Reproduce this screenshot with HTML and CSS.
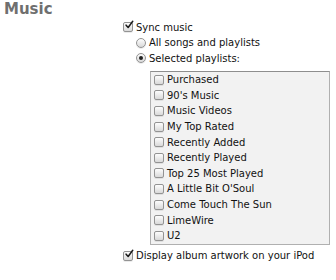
FILE: index.html
```html
<!DOCTYPE html>
<html lang="en">
<head>
    <meta charset="UTF-8">
    <title>Music</title>
    <link rel="stylesheet" href="styles.css">
</head>
<body>
    <h2 class="title">Music</h2>

    <div class="options">
        <label class="row">
            <span class="check on"><svg viewBox="0 0 12 12"><path d="M2.5 6.2 L5 9 L10.5 1.5" /></svg></span>
            Sync music
        </label>

        <div class="sub">
            <label class="row"><span class="radio"></span>All songs and playlists</label>
            <label class="row"><span class="radio on"></span>Selected playlists:</label>

            <ul class="playlists">
                <li><span class="check"></span>Purchased</li>
                <li><span class="check"></span>90's Music</li>
                <li><span class="check"></span>Music Videos</li>
                <li><span class="check"></span>My Top Rated</li>
                <li><span class="check"></span>Recently Added</li>
                <li><span class="check"></span>Recently Played</li>
                <li><span class="check"></span>Top 25 Most Played</li>
                <li><span class="check"></span>A Little Bit O'Soul</li>
                <li><span class="check"></span>Come Touch The Sun</li>
                <li><span class="check"></span>LimeWire</li>
                <li><span class="check"></span>U2</li>
            </ul>
        </div>

        <label class="row artwork">
            <span class="check on"><svg viewBox="0 0 12 12"><path d="M2.5 6.2 L5 9 L10.5 1.5" /></svg></span>
            Display album artwork on your iPod
        </label>
    </div>
</body>
</html>
```

FILE: styles.css
```css
body {
    margin: 0;
    background: #fff;
    font-family: "DejaVu Sans", sans-serif;
    font-size: 10px;
    color: #111;
}

.title {
    margin: 0;
    padding: 1px 0 0 4px;
    height: 17px;
    font-size: 15px;
    font-weight: bold;
    color: #6f6f6f;
    line-height: 16px;
}

.options {
    padding: 1px 0 0 123px;
}

.row {
    display: flex;
    align-items: center;
    height: 16px;
}

.sub {
    padding-left: 13px;
}

.sub .row {
    height: 15.5px;
}

.check,
.radio {
    position: relative;
    flex: none;
    box-sizing: border-box;
    width: 10px;
    height: 10px;
    margin-right: 3px;
    border: 1px solid #939393;
    background: linear-gradient(#fdfdfd, #d9d9d9);
    box-shadow: 0 1px 0 rgba(0, 0, 0, 0.08);
}

.check {
    border-radius: 2px;
}

.radio {
    border-radius: 50%;
}

.radio.on::after {
    content: "";
    position: absolute;
    left: 2px;
    top: 2px;
    width: 4px;
    height: 4px;
    border-radius: 50%;
    background: #222;
}

.check svg {
    position: absolute;
    left: 0;
    top: -3px;
    width: 10px;
    height: 10px;
    overflow: visible;
}

.check svg path {
    fill: none;
    stroke: #1a1a1a;
    stroke-width: 1.8;
    stroke-linecap: round;
    stroke-linejoin: round;
}

.playlists {
    list-style: none;
    margin: 5px 0 0 14px;
    padding: 0 0 0 3px;
    width: 180px;
    box-sizing: border-box;
    border: 1px solid #b0b0b0;
    border-top-color: #8e8e8e;
    background: #f2f2f2;
}

.playlists li {
    display: flex;
    align-items: center;
    height: 15.6px;
}

.artwork {
    margin-top: 3px;
}
```
